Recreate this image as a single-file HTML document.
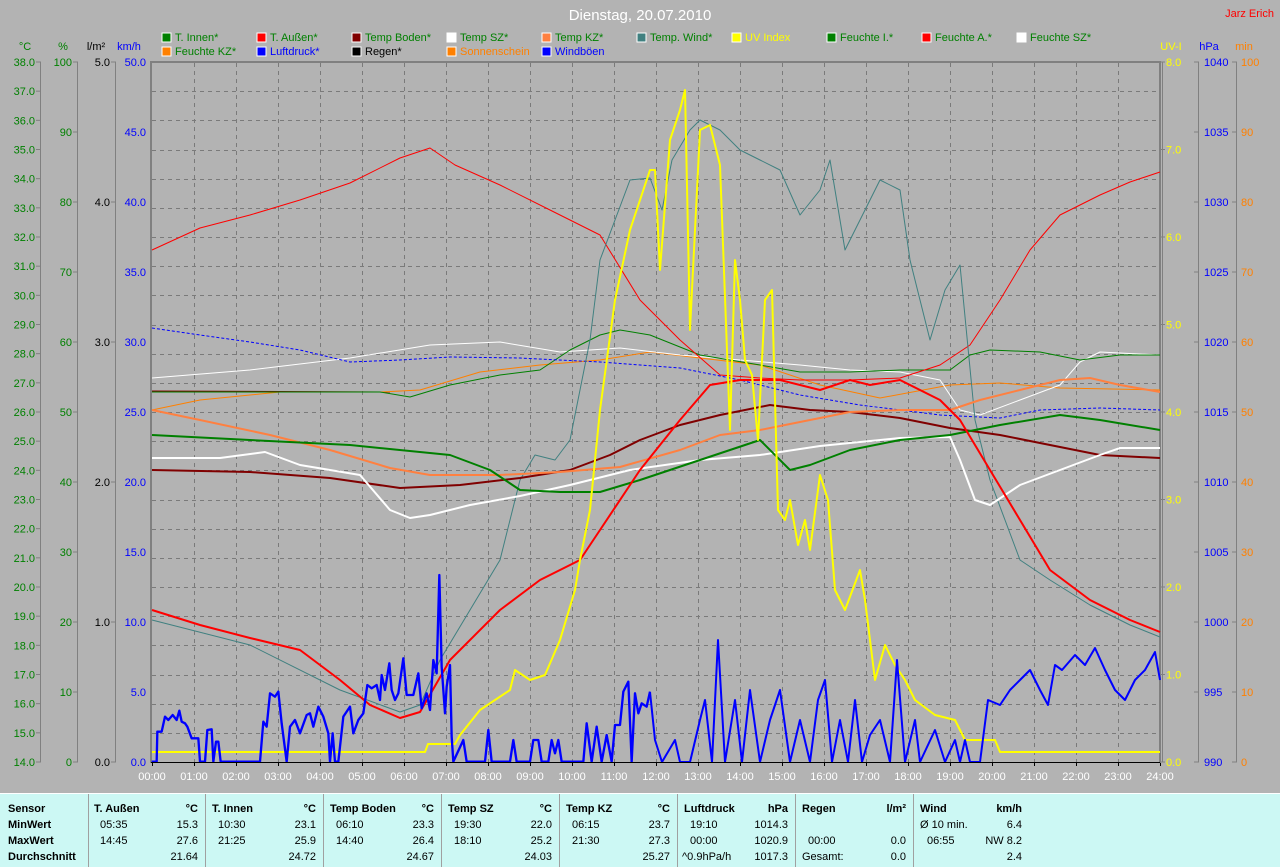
<!DOCTYPE html>
<html><head><meta charset="utf-8"><style>
html,body{margin:0;padding:0;width:1280px;height:867px;overflow:hidden;background:#b3b3b3;font-family:"Liberation Sans",sans-serif}
svg{display:block}
text{font-family:"Liberation Sans",sans-serif;font-size:11px}
.b{font-weight:bold}
</style></head><body>
<svg width="1280" height="867" viewBox="0 0 1280 867" xmlns="http://www.w3.org/2000/svg">
<rect width="1280" height="867" fill="#b3b3b3"/>
<text x="640" y="20" text-anchor="middle" fill="#fff" style="font-size:15px">Dienstag, 20.07.2010</text>
<text x="1274" y="17" text-anchor="end" fill="#f00" style="font-size:11px">Jarz Erich</text>
<!-- legend -->
<g style="font-size:11px">
<rect x="162" y="33" width="9" height="9" fill="#008000" stroke="#fff"/><text x="175" y="41" fill="#008000">T. Innen*</text>
<rect x="257" y="33" width="9" height="9" fill="#f00" stroke="#fff"/><text x="270" y="41" fill="#008000">T. Außen*</text>
<rect x="352" y="33" width="9" height="9" fill="#800000" stroke="#fff"/><text x="365" y="41" fill="#008000">Temp Boden*</text>
<rect x="447" y="33" width="9" height="9" fill="#fff" stroke="#fff"/><text x="460" y="41" fill="#008000">Temp SZ*</text>
<rect x="542" y="33" width="9" height="9" fill="#ff8040" stroke="#fff"/><text x="555" y="41" fill="#008000">Temp KZ*</text>
<rect x="637" y="33" width="9" height="9" fill="#408080" stroke="#fff"/><text x="650" y="41" fill="#008000">Temp. Wind*</text>
<rect x="732" y="33" width="9" height="9" fill="#ff0" stroke="#fff"/><text x="745" y="41" fill="#ff0">UV Index</text>
<rect x="827" y="33" width="9" height="9" fill="#008000" stroke="#fff"/><text x="840" y="41" fill="#008000">Feuchte I.*</text>
<rect x="922" y="33" width="9" height="9" fill="#f00" stroke="#fff"/><text x="935" y="41" fill="#008000">Feuchte A.*</text>
<rect x="1017" y="33" width="9" height="9" fill="#fff" stroke="#fff"/><text x="1030" y="41" fill="#008000">Feuchte SZ*</text>
<rect x="162" y="47" width="9" height="9" fill="#ff8000" stroke="#fff"/><text x="175" y="55" fill="#008000">Feuchte KZ*</text>
<rect x="257" y="47" width="9" height="9" fill="#00f" stroke="#fff"/><text x="270" y="55" fill="#00f">Luftdruck*</text>
<rect x="352" y="47" width="9" height="9" fill="#000" stroke="#fff"/><text x="365" y="55" fill="#000">Regen*</text>
<rect x="447" y="47" width="9" height="9" fill="#ff8000" stroke="#fff"/><text x="460" y="55" fill="#ff8000">Sonnenschein</text>
<rect x="542" y="47" width="9" height="9" fill="#00f" stroke="#fff"/><text x="555" y="55" fill="#00f">Windböen</text>
</g>
<!-- axis headers -->
<text x="25" y="50" text-anchor="middle" fill="#008000">°C</text>
<text x="63" y="50" text-anchor="middle" fill="#008000">%</text>
<text x="96" y="50" text-anchor="middle" fill="#000">l/m²</text>
<text x="129" y="50" text-anchor="middle" fill="#00f">km/h</text>
<text x="1171" y="50" text-anchor="middle" fill="#ff0">UV-I</text>
<text x="1209" y="50" text-anchor="middle" fill="#00f">hPa</text>
<text x="1244" y="50" text-anchor="middle" fill="#ff8000">min</text>
<!-- axis lines -->
<g stroke="#808080" stroke-width="1">
<line x1="40.5" y1="62" x2="40.5" y2="762"/>
<line x1="77.5" y1="62" x2="77.5" y2="762"/>
<line x1="115.5" y1="62" x2="115.5" y2="762"/>
<line x1="1162.5" y1="62" x2="1162.5" y2="762"/>
<line x1="1198.5" y1="62" x2="1198.5" y2="762"/>
<line x1="1236.5" y1="62" x2="1236.5" y2="762"/>
</g>
<g id="ticks" stroke="#808080"></g>
<!-- grid -->
<g stroke="#7a7a7a" stroke-dasharray="4,4" stroke-width="1" id="grid"></g>
<!-- plot frame -->
<line x1="151" y1="62" x2="1160" y2="62" stroke="#808080" stroke-width="2"/>
<line x1="151" y1="61" x2="151" y2="763" stroke="#808080" stroke-width="2"/>
<line x1="1160" y1="61" x2="1160" y2="763" stroke="#808080" stroke-width="2"/>
<g id="labels"></g>

<g fill="none" stroke-linejoin="round">
<!-- thin lines -->
<polyline stroke="#800000" stroke-width="1" points="152,391 390,392"/>
<polyline stroke="#ff8000" stroke-width="1" points="152,410 200,400 280,392 380,392 420,390 480,372 540,365 600,360 650,352 700,358 760,365 820,385 880,398 950,385 1000,383 1060,388 1160,390"/>
<polyline stroke="#fff" stroke-width="1" points="152,378 250,370 350,358 430,345 500,342 560,352 620,348 680,355 740,360 800,365 850,370 900,372 940,380 960,410 980,415 1020,400 1060,385 1080,362 1100,352 1160,355"/>
<polyline stroke="#008000" stroke-width="1" points="152,392 380,392 410,397 450,385 500,375 540,370 570,350 600,335 620,330 650,335 700,355 760,365 800,372 850,372 900,370 950,370 970,355 990,350 1040,352 1080,360 1120,355 1160,355"/>
<polyline stroke="#00f" stroke-width="1" stroke-dasharray="3,2" points="152,328 200,335 250,342 300,350 350,362 400,360 450,357 520,358 600,362 680,368 740,380 800,395 860,405 940,415 1000,418 1040,410 1100,408 1160,410"/>
<polyline stroke="#f00" stroke-width="1" points="152,250 200,228 250,215 300,200 350,183 400,158 430,148 455,165 500,185 550,210 600,235 640,300 680,340 720,375 760,378 800,380 850,380 900,378 940,365 970,345 1000,300 1030,250 1060,215 1100,195 1130,182 1160,172"/>
<polyline stroke="#408080" stroke-width="1" points="152,620 250,645 340,690 400,712 420,705 440,660 500,560 520,480 535,455 555,460 570,440 590,340 600,260 615,220 630,180 650,178 662,210 672,160 690,130 700,120 720,130 740,150 760,160 780,170 800,215 820,190 830,160 845,250 860,220 880,180 900,190 910,260 930,340 945,290 960,265 975,420 990,480 1020,560 1050,580 1090,605 1130,625 1160,637"/>
<!-- thick lines -->
<polyline stroke="#800000" stroke-width="2" points="152,470 250,472 330,478 400,488 460,485 520,478 570,470 610,455 640,440 680,425 720,415 770,405 810,410 850,412 900,418 950,428 1000,435 1050,445 1100,455 1160,458"/>
<polyline stroke="#ff8040" stroke-width="2" points="152,410 200,420 270,435 330,450 390,468 430,475 500,475 560,472 620,467 680,450 720,435 760,430 800,422 850,412 900,410 950,410 980,400 1020,390 1060,380 1090,378 1120,385 1160,392"/>
<polyline stroke="#fff" stroke-width="2" points="152,458 220,458 265,452 300,465 360,475 390,510 410,518 430,515 470,505 520,496 570,485 630,470 700,460 760,455 820,446 900,438 950,437 960,460 975,500 990,505 1020,485 1060,470 1100,455 1120,448 1160,448"/>
<polyline stroke="#008000" stroke-width="2" points="152,435 250,440 350,445 450,455 490,470 520,490 560,492 600,492 640,480 700,460 760,440 790,470 810,465 850,450 900,440 950,435 1000,425 1060,415 1100,420 1160,430"/>
<polyline stroke="#f00" stroke-width="2" points="152,610 200,625 250,638 300,650 340,680 370,705 400,718 420,712 450,660 500,610 540,580 580,560 600,530 640,470 680,420 710,385 740,380 780,380 820,390 850,380 870,385 900,380 940,400 960,420 990,470 1020,520 1050,570 1090,600 1130,620 1160,632"/>
<polyline stroke="#ff0" stroke-width="2" points="152,752 425,752 428,744 455,744 460,735 480,710 510,690 515,670 530,680 545,675 560,640 575,590 580,560 590,510 600,410 615,300 630,230 650,170 655,170 660,270 670,140 680,110 685,90 690,330 700,130 710,125 720,165 730,430 735,260 740,300 745,360 752,375 758,440 765,300 772,290 778,510 785,520 790,500 798,545 805,520 810,550 820,475 828,500 835,590 845,610 860,570 865,600 875,680 885,645 895,665 905,680 915,700 935,715 955,720 965,740 995,740 1000,752 1160,752"/>
<g transform="translate(150,560) scale(0.33333)">
<polyline stroke="#00f" stroke-width="7" points="5,605 20,605 22,515 35,515 45,470 55,480 68,465 80,480 88,452 95,485 105,490 112,500 125,535 145,535 150,605 165,605 172,510 185,508 190,605 198,545 205,545 212,605 330,605 340,485 350,500 360,400 375,410 385,395 395,490 410,605 420,500 435,480 450,520 470,465 480,460 490,500 505,440 520,470 535,520 540,605 548,520 555,605 565,605 580,470 600,440 610,520 625,480 640,460 652,375 665,385 680,375 690,420 695,345 705,390 718,310 725,390 735,420 745,400 760,295 770,405 790,405 805,340 815,445 830,400 840,450 850,300 860,340 868,45 875,320 885,460 890,380 900,315 905,530 910,605 940,540 950,605 1005,605 1015,510 1025,605 1080,605 1090,540 1100,605 1140,605 1150,540 1165,540 1175,605 1195,605 1205,540 1215,580 1225,540 1235,605 1300,605 1310,490 1325,605 1340,500 1355,605 1370,525 1385,605 1395,495 1410,495 1420,395 1435,365 1445,605 1455,400 1465,460 1475,430 1490,440 1500,395"/>
</g>
<polyline stroke="#00f" stroke-width="2" points="650,692 655,740 662,762 675,740 680,762 690,762 700,720 705,700 712,762 718,640 725,762 735,700 742,762 750,690 760,762 770,720 780,690 790,762 800,720 810,762 818,700 825,680 832,762 840,720 848,762 855,700 862,762 870,735 880,720 890,762 897,660 905,762 915,720 920,762 935,730 945,762 955,740 960,762 965,740 970,762 980,762 988,700 1000,705 1010,690 1020,680 1030,670 1040,690 1048,705 1055,665 1062,670 1075,655 1085,665 1095,648 1105,670 1115,690 1125,700 1135,680 1145,670 1155,652 1160,680"/>
</g>
<line x1="151" y1="762.5" x2="1160" y2="762.5" stroke="#000" stroke-width="1"/>
<g id="tlabels" fill="#fff" text-anchor="middle"></g>

<!-- table -->
<rect x="0" y="794" width="1280" height="73" fill="#ccf8f4"/>
<line x1="0" y1="793.5" x2="1280" y2="793.5" stroke="#fff"/>
<g stroke="#a0a0a0" stroke-width="1">
<line x1="88.5" y1="794" x2="88.5" y2="867"/><line x1="205.5" y1="794" x2="205.5" y2="867"/><line x1="323.5" y1="794" x2="323.5" y2="867"/><line x1="441.5" y1="794" x2="441.5" y2="867"/><line x1="559.5" y1="794" x2="559.5" y2="867"/><line x1="677.5" y1="794" x2="677.5" y2="867"/><line x1="795.5" y1="794" x2="795.5" y2="867"/><line x1="913.5" y1="794" x2="913.5" y2="867"/>
</g>
<g fill="#000">
<text x="8" y="812" class="b">Sensor</text><text x="8" y="828" class="b">MinWert</text><text x="8" y="844" class="b">MaxWert</text><text x="8" y="860" class="b">Durchschnitt</text>
<text x="94" y="812" class="b">T. Außen</text><text x="198" y="812" class="b" text-anchor="end">°C</text>
<text x="100" y="828">05:35</text><text x="198" y="828" text-anchor="end">15.3</text>
<text x="100" y="844">14:45</text><text x="198" y="844" text-anchor="end">27.6</text>
<text x="198" y="860" text-anchor="end">21.64</text>
<text x="212" y="812" class="b">T. Innen</text><text x="316" y="812" class="b" text-anchor="end">°C</text>
<text x="218" y="828">10:30</text><text x="316" y="828" text-anchor="end">23.1</text>
<text x="218" y="844">21:25</text><text x="316" y="844" text-anchor="end">25.9</text>
<text x="316" y="860" text-anchor="end">24.72</text>
<text x="330" y="812" class="b">Temp Boden</text><text x="434" y="812" class="b" text-anchor="end">°C</text>
<text x="336" y="828">06:10</text><text x="434" y="828" text-anchor="end">23.3</text>
<text x="336" y="844">14:40</text><text x="434" y="844" text-anchor="end">26.4</text>
<text x="434" y="860" text-anchor="end">24.67</text>
<text x="448" y="812" class="b">Temp SZ</text><text x="552" y="812" class="b" text-anchor="end">°C</text>
<text x="454" y="828">19:30</text><text x="552" y="828" text-anchor="end">22.0</text>
<text x="454" y="844">18:10</text><text x="552" y="844" text-anchor="end">25.2</text>
<text x="552" y="860" text-anchor="end">24.03</text>
<text x="566" y="812" class="b">Temp KZ</text><text x="670" y="812" class="b" text-anchor="end">°C</text>
<text x="572" y="828">06:15</text><text x="670" y="828" text-anchor="end">23.7</text>
<text x="572" y="844">21:30</text><text x="670" y="844" text-anchor="end">27.3</text>
<text x="670" y="860" text-anchor="end">25.27</text>
<text x="684" y="812" class="b">Luftdruck</text><text x="788" y="812" class="b" text-anchor="end">hPa</text>
<text x="690" y="828">19:10</text><text x="788" y="828" text-anchor="end">1014.3</text>
<text x="690" y="844">00:00</text><text x="788" y="844" text-anchor="end">1020.9</text>
<text x="682" y="860">^0.9hPa/h</text><text x="788" y="860" text-anchor="end">1017.3</text>
<text x="802" y="812" class="b">Regen</text><text x="906" y="812" class="b" text-anchor="end">l/m²</text>
<text x="808" y="844">00:00</text><text x="906" y="844" text-anchor="end">0.0</text>
<text x="802" y="860">Gesamt:</text><text x="906" y="860" text-anchor="end">0.0</text>
<text x="920" y="812" class="b">Wind</text><text x="1022" y="812" class="b" text-anchor="end">km/h</text>
<text x="920" y="828">Ø 10 min.</text><text x="1022" y="828" text-anchor="end">6.4</text>
<text x="927" y="844">06:55</text><text x="1022" y="844" text-anchor="end">NW 8.2</text>
<text x="1022" y="860" text-anchor="end">2.4</text>
</g>
</svg>
<script>
var NS="http://www.w3.org/2000/svg";
function el(p,t,a,txt){var e=document.createElementNS(NS,t);for(var k in a)e.setAttribute(k,a[k]);if(txt!=null)e.textContent=txt;document.getElementById(p).appendChild(e);}
for(var k=1;k<24;k++){var x=152+42*k+0.5;el("grid","line",{x1:x,y1:63,x2:x,y2:762});}
for(var k=1;k<24;k++){var y=Math.round(62+700/24*k)+0.5;el("grid","line",{x1:152,y1:y,x2:1160,y2:y});}
for(var k=0;k<=24;k++){var x=152+42*k;var h=(k<10?"0":"")+k+":00";el("tlabels","text",{x:x,y:780},h);el("ticks","line",{x1:x+0.5,y1:762,x2:x+0.5,y2:766,stroke:"#000"});}
for(var k=0;k<=24;k++){var y=62+700/24*k;el("labels","text",{x:35,y:y+4,"text-anchor":"end",fill:"#008000"},(38-k).toFixed(1));el("ticks","line",{x1:36,y1:y,x2:41,y2:y});}
for(var k=0;k<=10;k++){var y=62+70*k;el("labels","text",{x:72,y:y+4,"text-anchor":"end",fill:"#008000"},String(100-10*k));el("ticks","line",{x1:73,y1:y,x2:78,y2:y});
el("labels","text",{x:146,y:y+4,"text-anchor":"end",fill:"#00f"},(50-5*k).toFixed(1));
el("labels","text",{x:1204,y:y+4,fill:"#00f"},String(1040-5*k));el("ticks","line",{x1:1194,y1:y,x2:1199,y2:y});
el("labels","text",{x:1241,y:y+4,fill:"#ff8000"},String(100-10*k));el("ticks","line",{x1:1232,y1:y,x2:1237,y2:y});}
for(var k=0;k<=5;k++){var y=62+140*k;el("labels","text",{x:110,y:y+4,"text-anchor":"end",fill:"#000"},(5-k).toFixed(1));el("ticks","line",{x1:111,y1:y,x2:116,y2:y});}
for(var k=0;k<=8;k++){var y=62+87.5*k;el("labels","text",{x:1166,y:y+4,fill:"#ff0"},(8-k).toFixed(1));el("ticks","line",{x1:1160,y1:y,x2:1165,y2:y});}
</script>
</body></html>
